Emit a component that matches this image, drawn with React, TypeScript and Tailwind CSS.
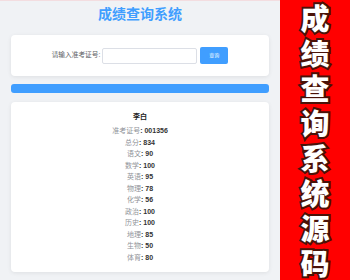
const scores = [
  { label: '准考证号', value: '001356' },
  { label: '总分', value: '834' },
  { label: '语文', value: '90' },
  { label: '数学', value: '100' },
  { label: '英语', value: '95' },
  { label: '物理', value: '78' },
  { label: '化学', value: '56' },
  { label: '政治', value: '100' },
  { label: '历史', value: '100' },
  { label: '地理', value: '85' },
  { label: '生物', value: '50' },
  { label: '体育', value: '80' },
];

const banner = ['成', '绩', '查', '询', '系', '统', '源', '码'];

export default function App() {
  return (
    <div className="flex w-[350px] h-[280px] overflow-hidden font-['Liberation_Sans','Noto_Sans_CJK_SC',sans-serif]">
      {/* Page */}
      <div className="w-[280px] h-full bg-[#f0f2f5] border-t border-[#f3dde0] px-[11px]">
        <h1 className="h-[26px] flex items-center justify-center text-[14px] font-bold text-[#409eff]">
          成绩查询系统
        </h1>

        {/* Search card */}
        <div className="mt-[8px] h-[41px] bg-white rounded-[4px] shadow-[0_1px_4px_rgba(0,0,0,0.08)] flex items-center justify-center">
          <span className="text-[6.7px] text-[#606266] leading-none">请输入准考证号:</span>
          <input
            type="text"
            className="ml-[2px] w-[95px] h-[16px] bg-white border border-[#dcdfe6] rounded-[2px] outline-none"
          />
          <button className="ml-[3px] w-[28px] h-[17px] bg-[#409eff] rounded-[2px] text-white text-[5px] leading-none">
            查询
          </button>
        </div>

        {/* Progress bar */}
        <div className="mt-[8px] h-[9px] rounded-[3px] bg-[#409eff]"></div>

        {/* Result card */}
        <div className="mt-[9px] bg-white rounded-[4px] shadow-[0_1px_4px_rgba(0,0,0,0.08)] pt-[9px] pb-[9px] text-center">
          <p className="h-[12px] leading-[12px] text-[7px] font-bold text-[#222]">李白</p>
          <div className="mt-[2px]">
            {scores.map((s) => (
              <p key={s.label} className="h-[11.5px] leading-[11.5px] text-[7px]">
                <span className="text-[#909399]">{s.label}</span>
                <span className="font-bold text-[#333333]">: {s.value}</span>
              </p>
            ))}
          </div>
        </div>
      </div>

      {/* Red banner */}
      <div className="w-[70px] h-full bg-[#ff0000] flex flex-col items-center">
        {banner.map((c) => (
          <span
            key={c}
            className="h-[35px] leading-[35px] text-[29px] font-black text-white [-webkit-text-stroke:4px_#4a1208] [paint-order:stroke_fill] font-['Noto_Sans_CJK_SC',sans-serif]"
          >
            {c}
          </span>
        ))}
      </div>
    </div>
  );
}
